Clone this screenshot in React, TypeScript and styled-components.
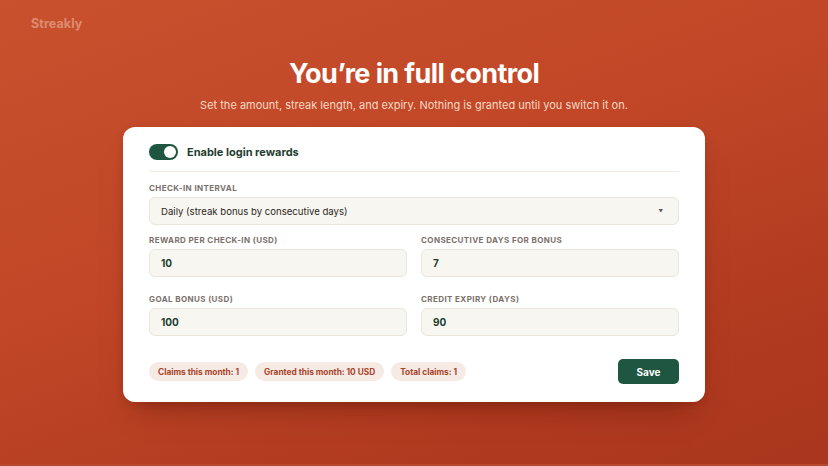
import React, {FC, useState} from "react";
import styled, {createGlobalStyle} from "styled-components";

const Colors = {
    green: "#1f5641",
    greenText: "#1e3d30",
    label: "#7b716a",
    fieldBg: "#f8f6f1",
    fieldBorder: "#ece5db",
    chipBg: "#f6ebe4",
    chipText: "#a9432a",
    divider: "#f0ebe4",
};

const GlobalStyle = createGlobalStyle`
  html, body {
    margin: 0;
    padding: 0;
  }
  body {
    font-family: Inter, "Noto Sans", "Liberation Sans", sans-serif;
  }
  * {
    box-sizing: border-box;
  }
`;

const Page = styled.div`
  width: 828px;
  height: 466px;
  overflow: hidden;
  background: linear-gradient(160deg, #c9512d 0%, #c04627 45%, #b03a1f 80%, #a9361c 100%);
  display: flex;
  flex-direction: column;
  align-items: center;
  border-bottom: 2px solid #b8482a;
`;

const TopBar = styled.header`
  align-self: stretch;
  padding: 16px 31px 0;
  height: 40px;
`;

const Logo = styled.div`
  font-size: 12.5px;
  font-weight: 700;
  color: rgba(255, 236, 226, 0.4);
  letter-spacing: 0.1px;
`;

const Hero = styled.div`
  text-align: center;
  margin-top: 17px;
`;

const Title = styled.h1`
  margin: 0;
  font-size: 27px;
  font-weight: 700;
  color: #fff;
  letter-spacing: -0.6px;
  line-height: 34px;
`;

const Subtitle = styled.p`
  margin: 6px 0 0;
  font-size: 11px;
  color: rgba(255, 232, 220, 0.9);
  line-height: 16px;
`;

const Card = styled.section`
  width: 582px;
  margin-top: 14px;
  background: #fff;
  border-radius: 12px;
  padding: 17px 26px 18px;
  box-shadow: 0 18px 26px -14px rgba(90, 20, 5, 0.55), 0 2px 6px rgba(80, 20, 5, 0.15);
`;

const ToggleRow = styled.div`
  display: flex;
  align-items: center;
  gap: 9px;
  padding-bottom: 11px;
  border-bottom: 1px solid ${Colors.divider};
`;

const Switch = styled.button<{on: boolean}>`
  width: 29px;
  height: 16px;
  border: none;
  padding: 2px;
  border-radius: 8px;
  background: ${p => (p.on ? Colors.green : "#cfc7bd")};
  display: flex;
  justify-content: ${p => (p.on ? "flex-end" : "flex-start")};
  cursor: pointer;
  span {
    width: 12px;
    height: 12px;
    border-radius: 50%;
    background: #fff;
  }
`;

const ToggleLabel = styled.span`
  font-size: 11px;
  font-weight: 700;
  color: ${Colors.greenText};
`;

const Field = styled.label<{top: number}>`
  display: flex;
  flex-direction: column;
  gap: 4px;
  margin-top: ${p => p.top}px;
`;

const FieldLabel = styled.span`
  font-size: 8px;
  font-weight: 700;
  letter-spacing: 0.4px;
  text-transform: uppercase;
  color: ${Colors.label};
  line-height: 10px;
`;

const Box = styled.div`
  height: 28px;
  border-radius: 6px;
  background: ${Colors.fieldBg};
  border: 1px solid ${Colors.fieldBorder};
  display: flex;
  align-items: center;
  padding: 0 11px;
`;

const SelectBox = styled(Box)`
  justify-content: space-between;
  font-size: 9.6px;
  color: #2a2622;
  span:last-child {
    font-size: 4.5px;
    color: #555;
    margin-right: 4px;
  }
`;

const InputBox = styled(Box)`
  font-size: 10px;
  font-weight: 700;
  color: ${Colors.greenText};
`;

const Grid = styled.div<{top: number}>`
  display: grid;
  grid-template-columns: 1fr 1fr;
  column-gap: 14px;
  margin-top: ${p => p.top}px;
`;

const Footer = styled.div`
  display: flex;
  align-items: center;
  justify-content: space-between;
  margin-top: 23px;
`;

const Chips = styled.div`
  display: flex;
  gap: 7px;
`;

const Chip = styled.span`
  height: 19px;
  padding: 0 9px;
  border-radius: 10px;
  background: ${Colors.chipBg};
  color: ${Colors.chipText};
  font-size: 8.3px;
  font-weight: 700;
  display: flex;
  align-items: center;
`;

const SaveButton = styled.button`
  width: 61px;
  height: 25px;
  border: none;
  border-radius: 5px;
  background: ${Colors.green};
  color: #fff;
  font-family: inherit;
  font-size: 10px;
  font-weight: 700;
  cursor: pointer;
`;

const fields = [
    [
        {label: "Reward per check-in (USD)", value: "10"},
        {label: "Consecutive days for bonus", value: "7"},
    ],
    [
        {label: "Goal bonus (USD)", value: "100"},
        {label: "Credit expiry (days)", value: "90"},
    ],
];

const stats = ["Claims this month: 1", "Granted this month: 10 USD", "Total claims: 1"];

const App: FC = () => {
    const [enabled, setEnabled] = useState(true);

    return (
        <Page>
            <GlobalStyle/>
            <TopBar>
                <Logo>Streakly</Logo>
            </TopBar>
            <Hero>
                <Title>You’re in full control</Title>
                <Subtitle>Set the amount, streak length, and expiry. Nothing is granted until you switch it on.</Subtitle>
            </Hero>
            <Card>
                <ToggleRow>
                    <Switch on={enabled} onClick={() => setEnabled(!enabled)}>
                        <span/>
                    </Switch>
                    <ToggleLabel>Enable login rewards</ToggleLabel>
                </ToggleRow>
                <Field top={11}>
                    <FieldLabel>Check-in interval</FieldLabel>
                    <SelectBox>
                        <span>Daily (streak bonus by consecutive days)</span>
                        <span>▼</span>
                    </SelectBox>
                </Field>
                {fields.map((row, i) => (
                    <Grid key={i} top={i === 0 ? 10 : 17}>
                        {row.map(f => (
                            <Field key={f.label} top={0}>
                                <FieldLabel>{f.label}</FieldLabel>
                                <InputBox>{f.value}</InputBox>
                            </Field>
                        ))}
                    </Grid>
                ))}
                <Footer>
                    <Chips>
                        {stats.map(s => <Chip key={s}>{s}</Chip>)}
                    </Chips>
                    <SaveButton>Save</SaveButton>
                </Footer>
            </Card>
        </Page>
    );
};

export default App;
